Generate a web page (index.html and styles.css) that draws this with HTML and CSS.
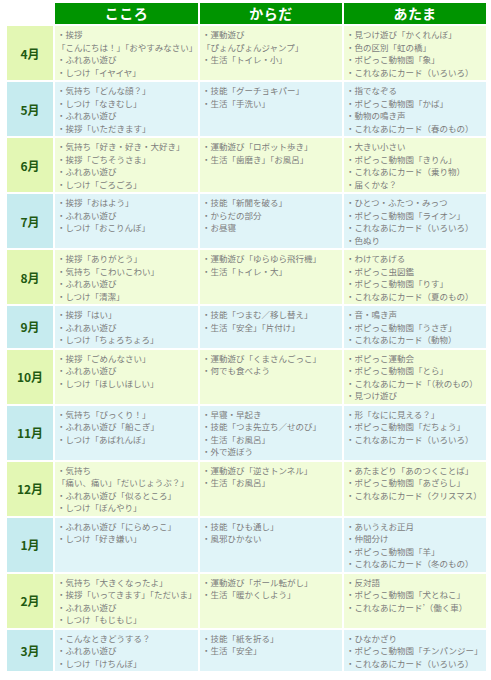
FILE: index.html
```html
<!DOCTYPE html>
<html lang="ja">
<head>
<meta charset="utf-8">
<link rel="stylesheet" href="styles.css">
</head>
<body>
<table class="plan">
  <colgroup>
    <col class="c-month"><col class="c-a"><col class="c-b"><col class="c-c">
  </colgroup>
  <thead>
    <tr>
      <th class="blank"></th>
      <th class="head">こころ</th>
      <th class="head">からだ</th>
      <th class="head">あたま</th>
    </tr>
  </thead>
  <tbody>
    <tr class="g">
      <th class="month">4月</th>
      <td><div>・挨拶</div><div>「こんにちは！」「おやすみなさい」</div><div>・ふれあい遊び</div><div>・しつけ「イヤイヤ」</div></td>
      <td><div>・運動遊び</div><div>「ぴょんぴょんジャンプ」</div><div>・生活「トイレ・小」</div></td>
      <td><div>・見つけ遊び「かくれんぼ」</div><div>・色の区別「虹の橋」</div><div>・ポピっこ動物園「象」</div><div>・これなあにカード（いろいろ）</div></td>
    </tr>
    <tr class="b">
      <th class="month">5月</th>
      <td><div>・気持ち「どんな顔？」</div><div>・しつけ「なきむし」</div><div>・ふれあい遊び</div><div>・挨拶「いただきます」</div></td>
      <td><div>・技能「グーチョキパー」</div><div>・生活「手洗い」</div></td>
      <td><div>・指でなぞる</div><div>・ポピっこ動物園「かば」</div><div>・動物の鳴き声</div><div>・これなあにカード（春のもの）</div></td>
    </tr>
    <tr class="g">
      <th class="month">6月</th>
      <td><div>・気持ち「好き・好き・大好き」</div><div>・挨拶「ごちそうさま」</div><div>・ふれあい遊び</div><div>・しつけ「ごろごろ」</div></td>
      <td><div>・運動遊び「ロボット歩き」</div><div>・生活「歯磨き」「お風呂」</div></td>
      <td><div>・大きい小さい</div><div>・ポピっこ動物園「きりん」</div><div>・これなあにカード（乗り物）</div><div>・届くかな？</div></td>
    </tr>
    <tr class="b">
      <th class="month">7月</th>
      <td><div>・挨拶「おはよう」</div><div>・ふれあい遊び</div><div>・しつけ「おこりんぼ」</div></td>
      <td><div>・技能「新聞を破る」</div><div>・からだの部分</div><div>・お昼寝</div></td>
      <td><div>・ひとつ・ふたつ・みっつ</div><div>・ポピっこ動物園「ライオン」</div><div>・これなあにカード（いろいろ）</div><div>・色ぬり</div></td>
    </tr>
    <tr class="g">
      <th class="month">8月</th>
      <td><div>・挨拶「ありがとう」</div><div>・気持ち「こわいこわい」</div><div>・ふれあい遊び</div><div>・しつけ「清潔」</div></td>
      <td><div>・運動遊び「ゆらゆら飛行機」</div><div>・生活「トイレ・大」</div></td>
      <td><div>・わけてあげる</div><div>・ポピっこ虫図鑑</div><div>・ポピっこ動物園「りす」</div><div>・これなあにカード（夏のもの）</div></td>
    </tr>
    <tr class="b">
      <th class="month">9月</th>
      <td><div>・挨拶「はい」</div><div>・ふれあい遊び</div><div>・しつけ「ちょろちょろ」</div></td>
      <td><div>・技能「つまむ／移し替え」</div><div>・生活「安全」「片付け」</div></td>
      <td><div>・音・鳴き声</div><div>・ポピっこ動物園「うさぎ」</div><div>・これなあにカード（動物）</div></td>
    </tr>
    <tr class="g">
      <th class="month">10月</th>
      <td><div>・挨拶「ごめんなさい」</div><div>・ふれあい遊び</div><div>・しつけ「ほしいほしい」</div></td>
      <td><div>・運動遊び「くまさんごっこ」</div><div>・何でも食べよう</div></td>
      <td><div>・ポピっこ運動会</div><div>・ポピっこ動物園「とら」</div><div>・これなあにカード「（秋のもの）</div><div>・見つけ遊び</div></td>
    </tr>
    <tr class="b">
      <th class="month">11月</th>
      <td><div>・気持ち「びっくり！」</div><div>・ふれあい遊び「船こぎ」</div><div>・しつけ「あばれんぼ」</div></td>
      <td><div>・早寝・早起き</div><div>・技能「つま先立ち／せのび」</div><div>・生活「お風呂」</div><div>・外で遊ぼう</div></td>
      <td><div>・形「なにに見える？」</div><div>・ポピっこ動物園「だちょう」</div><div>・これなあにカード（いろいろ）</div></td>
    </tr>
    <tr class="g">
      <th class="month">12月</th>
      <td><div>・気持ち</div><div>「痛い、痛い」「だいじょうぶ？」</div><div>・ふれあい遊び「似るところ」</div><div>・しつけ「ぼんやり」</div></td>
      <td><div>・運動遊び「逆さトンネル」</div><div>・生活「お風呂」</div></td>
      <td><div>・あたまどり「あのつくことば」</div><div>・ポピっこ動物園「あざらし」</div><div>・これなあにカード（クリスマス）</div></td>
    </tr>
    <tr class="b">
      <th class="month">1月</th>
      <td><div>・ふれあい遊び「にらめっこ」</div><div>・しつけ「好き嫌い」</div></td>
      <td><div>・技能「ひも通し」</div><div>・風邪ひかない</div></td>
      <td><div>・あいうえお正月</div><div>・仲間分け</div><div>・ポピっこ動物園「羊」</div><div>・これなあにカード（冬のもの）</div></td>
    </tr>
    <tr class="g">
      <th class="month">2月</th>
      <td><div>・気持ち「大きくなったよ」</div><div>・挨拶「いってきます」「ただいま」</div><div>・ふれあい遊び</div><div>・しつけ「もじもじ」</div></td>
      <td><div>・運動遊び「ボール転がし」</div><div>・生活「暖かくしよう」</div></td>
      <td><div>・反対語</div><div>・ポピっこ動物園「犬とねこ」</div><div>・これなあにカード’（働く車）</div></td>
    </tr>
    <tr class="b">
      <th class="month">3月</th>
      <td><div>・こんなときどうする？</div><div>・ふれあい遊び</div><div>・しつけ「けちんぼ」</div></td>
      <td><div>・技能「紙を折る」</div><div>・生活「安全」</div></td>
      <td><div>・ひなかざり</div><div>・ポピっこ動物園「チンパンジー」</div><div>・これなあにカード（いろいろ）</div></td>
    </tr>
  </tbody>
</table>
</body>
</html>
```
FILE: styles.css
```css
html, body {
  margin: 0;
  padding: 0;
  background: #ffffff;
}

body {
  font-family: "Noto Sans CJK JP", "Noto Sans", sans-serif;
}

.plan {
  margin: 1px 0 0 5px;
  border-collapse: separate;
  border-spacing: 2px;
  table-layout: fixed;
  width: 483px;
}

.c-month { width: 46px; }
.c-a { width: 143px; }
.c-b { width: 142px; }
.c-c { width: 142px; }

.blank {
  background: #ffffff;
  padding: 0;
}

.head {
  background: #009400;
  color: #ffffff;
  font-size: 14px;
  font-weight: bold;
  height: 21px;
  padding: 0;
  line-height: 21px;
  text-align: center;
  letter-spacing: 0.5px;
}

.month {
  font-size: 12px;
  font-weight: bold;
  color: #1f5a12;
  text-align: center;
  vertical-align: middle;
  padding: 0;
}

.plan td {
  vertical-align: top;
  padding: 2px 2px 2px 2px;
  font-size: 8.5px;
  line-height: 12.5px;
  color: #7c7c7c;
  white-space: nowrap;
  overflow: hidden;
}

.g .month { background: #e3f7b4; }
.g td { background: #f1fcd9; }
.b .month { background: #c6ebef; }
.b td { background: #e0f4f8; }
```
